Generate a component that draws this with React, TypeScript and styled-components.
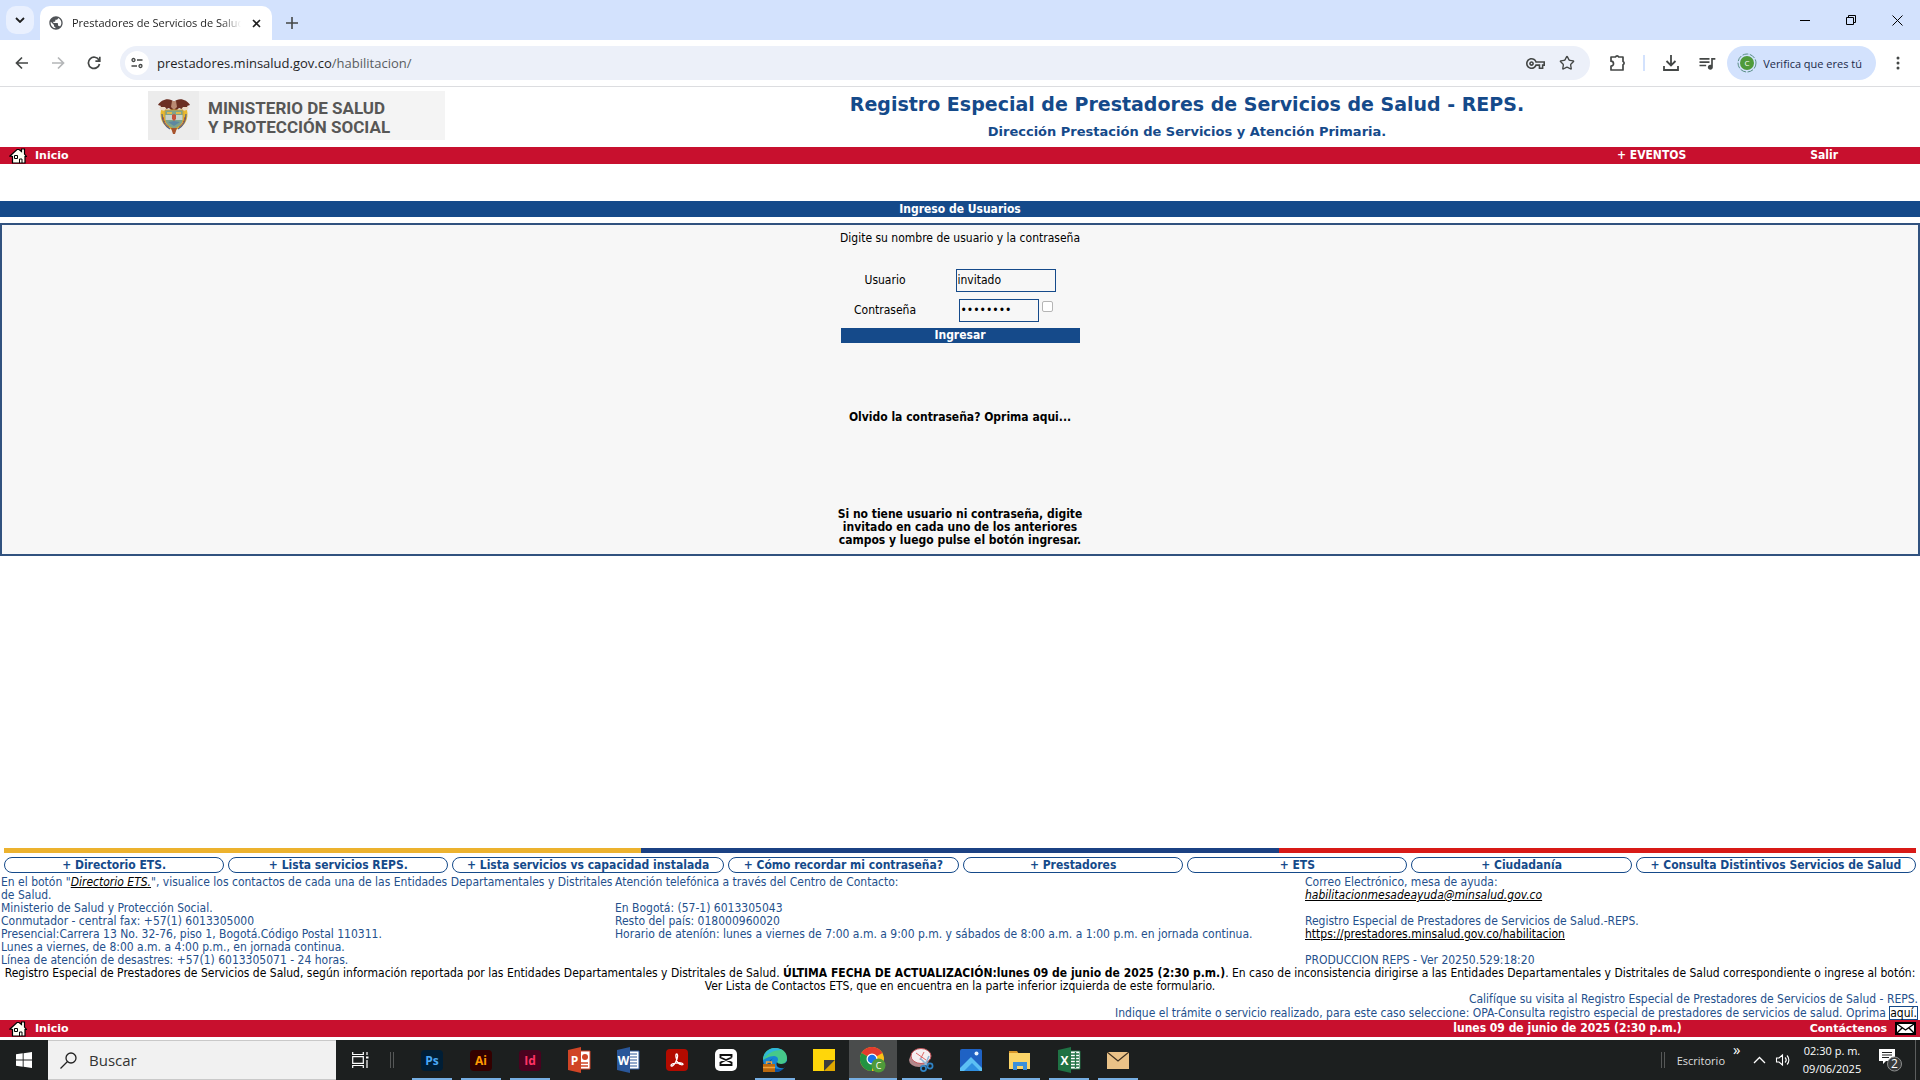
import React, { ReactNode } from "react";
import styled, { createGlobalStyle } from "styled-components";
import { Star } from "lucide-react";
import { MdQueueMusic, MdOutlineVpnKey, MdPublic } from "react-icons/md";

const verdana = `"DejaVu Sans Condensed", "DejaVu Sans", Verdana, sans-serif`;
const verdanaWide = `"DejaVu Sans", Verdana, sans-serif`;
const segoe = `"Segoe UI", "Open Sans", "Noto Sans", sans-serif`;
const NAVY = "#154a8a";
const RED = "#c8102e";

const Global = createGlobalStyle`
  * { box-sizing: border-box; }
  html, body, #root { height: 100%; margin: 0; }
  body { background: #fff; font: 12px/13px ${verdana}; color: #000; }
  button { font: inherit; border: 0; padding: 0; background: none; color: inherit; cursor: pointer; }
  a { color: inherit; text-decoration: none; }
`;

const Screen = styled.div`
  display: flex; flex-direction: column; min-height: 100vh;
`;

/* ---------- browser ---------- */
const TabStrip = styled.div`
  display: flex; align-items: flex-end; height: 40px; background: #d3e2fd; padding-left: 6px;
  font-family: ${segoe};
`;
const TabMenu = styled.button`
  display: grid; place-items: center; width: 28px; height: 28px; margin-bottom: 6px;
  border-radius: 10px;
  && { background: #e9f0fe; }
`;
const Tab = styled.div`
  display: flex; align-items: center; gap: 8px; width: 232px; height: 34px; margin-left: 6px;
  padding: 0 9px 0 8px; background: #fff; border-radius: 10px 10px 0 0; color: #1f1f1f;
`;
const TabTitle = styled.span`
  flex: 1; overflow: hidden; white-space: nowrap; font-size: 11px; line-height: 16px;
  mask-image: linear-gradient(90deg, #000 88%, transparent);
`;
const PlainButton = styled.button<{ $w?: number }>`
  display: grid; place-items: center; width: ${(p) => p.$w ?? 16}px; height: 34px; flex: none; color: #444746;
`;
const WindowControls = styled.div`
  display: flex; align-self: center; margin-left: auto;
`;
const Toolbar = styled.div`
  display: flex; align-items: center; height: 47px; padding: 0 0 0 4px; background: #fff;
  border-bottom: 1px solid #dcdde0; font-family: ${segoe};
`;
const Address = styled.div`
  display: flex; align-items: center; flex: 1; height: 34px; margin: 0 11px 0 8px; padding: 0 7px 0 5px;
  border-radius: 17px; background: #ecf0f9; color: #1f1f1f;
`;
const SiteInfo = styled.button`
  display: grid; place-items: center; width: 24px; height: 24px; border-radius: 50%;
  && { background: #fff; }
`;
const Url = styled.span`
  flex: 1; margin-left: 8px; font-size: 13px; line-height: 20px;
  span { color: #5a5d61; }
`;
const ToolbarRule = styled.span`
  width: 2px; height: 16px; margin: 0 8px; background: #d3e2fd;
`;
const ProfileChip = styled.button`
  display: flex; align-items: center; gap: 6px; height: 34px; margin-left: 2px; padding: 0 14px 0 10px;
  border-radius: 17px; color: #1b2a49;
  && { background: #d3e2fd; font-size: 11px; }
`;

/* ---------- page ---------- */
const Page = styled.div`
  display: flex; flex-direction: column; flex: 1; padding-bottom: 3px;
`;
const Header = styled.header`
  display: grid; grid-template-columns: 454px 1fr; height: 60px; padding: 4px 0;
`;
const Brand = styled.div`
  display: flex; align-items: center; width: 297px; height: 49px; margin-left: 148px; background: #f4f4f4;
  color: #575756; font: 700 17px/19px Roboto, "Open Sans", sans-serif;
`;
const BrandName = styled.span`
  padding-top: 4px;
`;
const Emblem = styled.div`
  display: grid; place-items: center; width: 51px; height: 49px; margin-right: 9px; background: #ececec;
`;
const Titles = styled.div`
  text-align: center; color: ${NAVY}; font-family: ${verdanaWide};
`;
const Title = styled.h1`
  margin: 0; font-size: 19px; line-height: 27px;
`;
const Subtitle = styled.h2`
  margin: 0; font-size: 13px; line-height: 27px;
`;
const RedBar = styled.nav`
  display: flex; align-items: center; height: 17px; padding: 0 4px 0 9px; background: ${RED};
  color: #fff; font-weight: 700; flex: none;
`;
const BarLink = styled.a`
  display: flex; align-items: center; gap: 8px; font: 700 11px/13px ${verdanaWide};
`;
const BarItems = styled.div<{ $gap: number; $end: number }>`
  display: flex; align-items: center; gap: ${(p) => p.$gap}px; margin: 0 ${(p) => p.$end}px 0 auto;
`;
const SectionTitle = styled.h3`
  margin: 37px 0 6px; background: ${NAVY}; color: #fff; font-size: 12px; line-height: 16px; text-align: center;
`;
const Panel = styled.main`
  display: flex; justify-content: center; border: 2px solid #31527f; background: #f7f7f7;
`;
const LoginForm = styled.form`
  display: flex; flex-direction: column; align-items: center; width: 239px; padding: 7px 0;
`;
const Prompt = styled.p`
  margin: 0 0 20px; white-space: nowrap;
`;
const Field = styled.div`
  display: grid; grid-template-columns: 89px 125px; justify-content: space-between; align-items: center;
  width: 100%; height: 30px;
  label { text-align: center; }
`;
const Controls = styled.div<{ $inset?: boolean }>`
  display: flex; gap: 3px; padding-left: ${(p) => (p.$inset ? 4 : 1)}px;
`;
const TextBox = styled.input<{ $w: number }>`
  width: ${(p) => p.$w}px; height: 23px; padding: 0 1px; border: 1px solid ${NAVY}; background: transparent;
  font: 12px ${verdana}; color: #000; outline: 0;
`;
const Check = styled.input`
  appearance: none; width: 11px; height: 11px; margin: 2px 0 0; border: 1px solid #b5b5b5; border-radius: 2px; background: #fff;
`;
const Submit = styled.button`
  width: 100%; height: 15px; margin: 3px 0 68px;
  && { background: ${NAVY}; color: #fff; font-weight: 700; }
`;
const Forgot = styled.a`
  font-weight: 700; white-space: nowrap;
`;
const Hint = styled.p`
  margin: 84px -10px 0; font-weight: 700; text-align: center; white-space: nowrap;
`;

const Footer = styled.footer`
  margin-top: auto;
`;
const Flag = styled.div`
  height: 5px; margin: 0 4px 4px;
  background: linear-gradient(90deg, #ecb22e 0 33.3%, #1b4183 33.3% 66.7%, #d81a17 66.7%);
`;
const Pills = styled.div`
  display: grid; grid-template-columns: 220fr 220fr 271fr 231fr 220fr 220fr 220fr 280fr; gap: 4px; padding: 0 4px;
`;
const Pill = styled.button`
  height: 16px; white-space: nowrap;
  && { border: 1px solid ${NAVY}; border-radius: 8px; color: ${NAVY}; font-weight: 700; }
`;
const Info = styled.div`
  display: grid; grid-template-columns: 614fr 690fr 614fr; padding: 3px 1px 0; color: #24508c;
`;
const InfoCell = styled.div`
  p { margin: 0; min-height: 13px; }
  a { color: #000; text-decoration: underline; }
`;
const Notice = styled.p`
  margin: 0; text-align: center;
`;
const Rating = styled.div`
  display: flex; flex-direction: column; align-items: flex-end; padding: 0 2px 0 0; color: #24508c;
`;
const HereLink = styled.a`
  display: inline-block; border: 1px solid ${NAVY}; color: #000; line-height: 12px;
`;

/* ---------- taskbar ---------- */
const Taskbar = styled.div`
  display: flex; align-items: center; height: 40px; flex: none; background: #1c1f1f; color: #fff;
  font-family: ${segoe};
`;
const StartButton = styled.button`
  display: grid; place-items: center; width: 48px; height: 40px;
`;
const Search = styled.label`
  display: flex; align-items: center; gap: 12px; width: 288px; height: 40px; padding-left: 12px;
  background: #f1f1f1; border: 1px solid #c9c9c9; border-width: 1px 0; color: #222;
  input { width: 200px; border: 0; background: none; outline: 0; padding: 0; font: 15px ${segoe}; color: #333; }
  input::placeholder { color: #333; opacity: 1; }
`;
const Apps = styled.div`
  display: flex; gap: 1px; margin-left: 8px;
`;
const AppButton = styled.button<{ $open?: boolean; $active?: boolean }>`
  display: grid; place-items: center; width: 48px; height: 40px;
  && {
    background-color: ${(p) => (p.$active ? "#4a4c4c" : "transparent")};
    background-image: ${(p) => (p.$open || p.$active ? "linear-gradient(#76aee2, #76aee2)" : "none")};
    background-repeat: no-repeat; background-position: bottom center;
    background-size: ${(p) => (p.$active ? 48 : 40)}px 2px;
  }
`;
const Adobe = styled.span<{ $bg: string; $fg: string }>`
  display: grid; place-items: center; width: 22px; height: 21px; border-radius: 4px;
  background: ${(p) => p.$bg}; color: ${(p) => p.$fg}; font: 700 12px ${segoe};
`;
const Grip = styled.span`
  width: 4px; height: 16px; margin: 0 6px; border: 1px solid #565858; border-width: 0 1px;
`;
const Tray = styled.div`
  display: flex; align-items: center; margin-left: auto; height: 40px;
`;
const Desktop = styled.span`
  margin-left: 6px; font-size: 11px; color: #ddd;
`;
const More = styled.span`
  width: 12px; margin: 0 8px 22px 8px; font-size: 15px; line-height: 16px;
`;
const Clock = styled.div`
  width: 62px; margin: 0 16px 0 9px; text-align: center; font-size: 11px; line-height: 18px; white-space: nowrap;
`;
const ShowDesktop = styled.button`
  width: 5px; height: 40px; margin-left: 12px;
  && { border-left: 1px solid #5c5e5e; }
`;

const Svg = ({ w, h = w, children }: { w: number; h?: number; children: ReactNode }) => (
  <svg width={w} height={h} viewBox={`0 0 ${w} ${h}`} fill="none" aria-hidden="true">{children}</svg>
);

const House = () => (
  <Svg w={18} h={16}>
    <path d="M1 8 8 1.500h2l2.500 2V1h3v5l2 2.500h-1.500V15H3.500V8.500z" fill="#fffff4" stroke="#000" strokeWidth="1.200" />
    <path d="M5.500 7.500h3v3h-3zM10.500 15v-4h2.500v4" stroke="#000" />
  </Svg>
);
const Mail = () => (
  <Svg w={21} h={13}>
    <path d="M1 1h19v11H1z" fill="#fff" stroke="#000" strokeWidth="2" />
    <path d="m2 2 8.500 6L19 2M2 11l5-5M19 11l-5-5" stroke="#000" strokeWidth="1.400" />
  </Svg>
);
const Crest = () => (
  <Svg w={34} h={36}>
    <path d="M17 4C13-1 4 1 1 7l3 1-1 2 4-1v3l5-2 2 2h6l2-2 5 2V9l4 1-1-2 3-1C30 1 21-1 17 4z" fill="#6b2f22" />
    <path d="m2 9 6 0 3 4-5 3zM32 9l-6 0-3 4 5 3z" fill="#e9d9c4" />
    <path d="M15 3h4l1 6-3 3-3-3z" fill="#b98a72" />
    <path d="M4 12c-2 9 2 17 12 20l2 0c10-3 14-11 12-20l-4 1v14H8V13z" fill="#e8b92e" />
    <path d="M5 16c0 7 3 12 8 15M29 16c0 7-3 12-8 15" stroke="#54618a" strokeWidth="1.200" />
    <path d="M6 19c1 5 3 8 6 10M28 19c-1 5-3 8-6 10" stroke="#b4522a" />
    <path d="M8 12h18v9c0 5-4 8-9 10-5-2-9-5-9-10z" fill="#7fa38b" stroke="#c9a23a" />
    <path d="M8.500 17h17v5h-17z" fill="#c9d2cc" />
    <path d="m15 17 2-1 2 1v4l-2 2-2-2z" fill="#c4523f" />
    <path d="M10 14h5v2h-5zM19 14h5v2h-5z" fill="#e0b84b" />
    <path d="m11 24 6-1 6 1-6 4z" fill="#5d87a0" />
    <path d="M14 30h6l-2 6h-2z" fill="#a8542d" />
  </Svg>
);
const Office = ({ color, letter, kind }: { color: string; letter: string; kind: "p" | "w" | "x" }) => (
  <Svg w={24} h={26}>
    <path d="M12 4h11v18H12z" fill="#fff" stroke={color} />
    {kind === "w" && <path d="M14 7h7M14 10h7M14 13h7M14 16h7M14 19h7" stroke={color} strokeWidth="1.200" />}
    {kind === "x" && <path d="M14 7h8M14 10h8M14 13h8M14 16h8M14 19h8M18.500 5v16" stroke={color} strokeWidth="1.300" />}
    {kind === "p" && <><circle cx="18" cy="10" r="3" fill={color} /><path d="M14 16h7M14 19h7" stroke={color} strokeWidth="1.400" /></>}
    <path d="M1 3 14 0v26L1 23z" fill={color} />
    <text x="7.500" y="17.500" textAnchor="middle" fill="#fff" fontFamily="Open Sans" fontWeight="700" fontSize="12">{letter}</text>
  </Svg>
);

const apps: { name: string; open?: boolean; active?: boolean; icon: ReactNode }[] = [
  { name: "Photoshop", open: true, icon: <Adobe $bg="#001e36" $fg="#4aa8f5">Ps</Adobe> },
  { name: "Illustrator", open: true, icon: <Adobe $bg="#330000" $fg="#ff9a00">Ai</Adobe> },
  { name: "InDesign", open: true, icon: <Adobe $bg="#49021f" $fg="#ff3366">Id</Adobe> },
  { name: "PowerPoint", icon: <Office color="#d04526" letter="P" kind="p" /> },
  { name: "Word", icon: <Office color="#2a579a" letter="W" kind="w" /> },
  {
    name: "Acrobat",
    icon: (
      <Svg w={22}>
        <rect width="22" height="22" rx="4" fill="#b30b00" />
        <path d="M10.500 5c2 0 1 5-1 8.500S5 18 5 16.500s4-2.500 7-2.700 5 .4 5 1.400-3 .8-4.800-1.200S9 5 10.500 5z" stroke="#fff" strokeWidth="1.300" />
      </Svg>
    ),
  },
  {
    name: "CapCut",
    icon: (
      <Svg w={22}>
        <rect width="22" height="22" rx="5" fill="#fff" />
        <path d="M16.500 8.500V6h-11v2.500l11 5V16h-11v-2.500l11-5" stroke="#111" strokeWidth="1.900" />
      </Svg>
    ),
  },
  {
    name: "Edge", open: true,
    icon: (
      <Svg w={26}>
        <circle cx="13" cy="13" r="12" fill="#1785d4" />
        <path d="M1 13C1 5 7 1 13 1c7 0 12 4 12 10 0 4-3 6-6 6-2 0-4-1-4-2 2-2 1-6-3-6-5 0-9 3-11 4z" fill="#46c98a" />
        <path d="M1 13C2 5 8 1 13 1c3 0 5 1 7 2-8 0-15 3-19 10z" fill="#2eb5dc" />
        <path d="M9 14c0 6 5 9 12 8-4 4-11 4-14-1-2-3-1-8 5-10-2 1-3 2-3 3z" fill="#0c4f9e" />
        <path d="M15 15c0 1 2 2 4 2 3 0 5-1 6-3 1 3-1 6-3 7-5 1-9-2-7-6z" fill="#1c1f1f" />
        <path d="M1 17h12v8H1z" fill="#b9680f" /><path d="M4.500 17v-2h5v2M1 20.500h12" stroke="#f2a33a" strokeWidth="1.300" />
      </Svg>
    ),
  },
  { name: "Notas", icon: <Svg w={22}><path d="M0 0h22v11L11 22H0z" fill="#ffd60a" /><path d="M11 11h11L11 22z" fill="#3d3d3d" /><path d="M22 11v11H11z" fill="#e0a800" /></Svg> },
  {
    name: "Chrome", active: true,
    icon: (
      <Svg w={26}>
        <circle cx="12" cy="12" r="12" fill="#fbc116" />
        <path d="M12 12 1.600 6A12 12 0 0 1 22.400 6z" fill="#e33b2e" />
        <path d="M12 12 1.600 6A12 12 0 0 0 12 24z" fill="#229342" />
        <circle cx="12" cy="12" r="5.500" fill="#fff" /><circle cx="12" cy="12" r="4.300" fill="#1a73e8" />
        <circle cx="18.500" cy="18.500" r="7" fill="#4f9a3a" />
        <text x="18.500" y="22" textAnchor="middle" fill="#fff" fontFamily="Open Sans" fontSize="9">C</text>
      </Svg>
    ),
  },
  {
    name: "Recortes", open: true,
    icon: (
      <Svg w={26} h={26}>
        <ellipse cx="10" cy="13" rx="10" ry="7" fill="#b3888c" /><ellipse cx="12" cy="9" rx="10" ry="7.500" fill="#f4eef0" stroke="#c4545a" />
        <path d="m7 6 10 7M15 5l-4 8" stroke="#d66" strokeWidth="1" />
        <path d="m11 11 8 8M20 9l-4 9" stroke="#8fb6d6" strokeWidth="1.600" />
        <circle cx="21" cy="19" r="2.600" stroke="#2f83c5" strokeWidth="1.700" /><circle cx="14.500" cy="21.500" r="2.600" stroke="#2f83c5" strokeWidth="1.700" />
      </Svg>
    ),
  },
  { name: "Fotos", icon: <Svg w={22}><rect width="22" height="22" rx="2" fill="#1f62c4" /><path d="M0 19 11 8l11 11v3H0z" fill="#5cc0f4" /><path d="m4 22 8-8 8 8z" fill="#2f8fe0" /><circle cx="16.500" cy="4.500" r="2" fill="#e8f4ff" /></Svg> },
  { name: "Explorador", open: true, icon: <Svg w={22} h={20}><path d="M0 1h8l2 3H0z" fill="#d9972a" /><path d="M0 3h21v16H0z" fill="#fbd468" /><path d="M4 20v-8h14v8h-4v-4H8v4z" fill="#3b8fdb" /></Svg> },
  { name: "Excel", open: true, icon: <Office color="#1f7244" letter="X" kind="x" /> },
  { name: "Correo", open: true, icon: <Svg w={22} h={17}><path d="M0 0h22v17H0z" fill="#e9c187" /><path d="m0 0 11 9 11-9" stroke="#3d2f1f" strokeWidth="1.300" /></Svg> },
];

const pills = ["+ Directorio ETS.", "+ Lista servicios REPS.", "+ Lista servicios vs capacidad instalada", "+ Cómo recordar mi contraseña?", "+ Prestadores", "+ ETS", "+ Ciudadanía", "+ Consulta Distintivos Servicios de Salud"];

function Browser() {
  return (
    <>
      <TabStrip>
        <TabMenu aria-label="Buscar pestañas"><Svg w={10} h={6}><path d="m1 1 4 4 4-4" stroke="#1f1f1f" strokeWidth="1.800" /></Svg></TabMenu>
        <Tab>
          <MdPublic size={16} color="#505357" />
          <TabTitle>Prestadores de Servicios de Salud</TabTitle>
          <PlainButton aria-label="Cerrar pestaña" $w={14}><Svg w={9}><path d="m1 1 7 7M8 1 1 8" stroke="#1f1f1f" strokeWidth="1.600" /></Svg></PlainButton>
        </Tab>
        <PlainButton aria-label="Nueva pestaña" $w={40}><Svg w={12}><path d="M6 0v12M0 6h12" stroke="#444746" strokeWidth="1.600" /></Svg></PlainButton>
        <WindowControls>
          <PlainButton aria-label="Minimizar" $w={46}><Svg w={10}><path d="M0 5.500h10" stroke="#000" /></Svg></PlainButton>
          <PlainButton aria-label="Restaurar" $w={46}><Svg w={10}><path d="M.5 2.500h7v7h-7zM2.500 2.500v-2h7v7h-2" stroke="#000" /></Svg></PlainButton>
          <PlainButton aria-label="Cerrar" $w={46}><Svg w={11}><path d="m.5.5 10 10M10.500.5l-10 10" stroke="#000" /></Svg></PlainButton>
        </WindowControls>
      </TabStrip>
      <Toolbar>
        <PlainButton aria-label="Atrás" $w={36}><Svg w={14}><path d="M13 7H2M7 1.500 1.500 7 7 12.500" stroke="#444746" strokeWidth="1.700" /></Svg></PlainButton>
        <PlainButton aria-label="Adelante" $w={36}><Svg w={14}><path d="M1 7h11M7 1.500 12.500 7 7 12.500" stroke="#b4b6b8" strokeWidth="1.700" /></Svg></PlainButton>
        <PlainButton aria-label="Recargar" $w={36}><Svg w={14}><path d="M12 4.200A5.600 5.600 0 1 0 12.500 8M12.800.8v4.400H8.400" stroke="#444746" strokeWidth="1.700" /></Svg></PlainButton>
        <Address>
          <SiteInfo aria-label="Información del sitio"><Svg w={12}><path d="M6 3h5.500M.5 9H6" stroke="#444746" strokeWidth="1.600" /><circle cx="2.500" cy="3" r="1.500" stroke="#444746" strokeWidth="1.300" /><circle cx="9.500" cy="9" r="1.500" stroke="#444746" strokeWidth="1.300" /></Svg></SiteInfo>
          <Url>prestadores.minsalud.gov.co<span>/habilitacion/</span></Url>
          <PlainButton aria-label="Contraseñas" $w={32}><MdOutlineVpnKey size={19} /></PlainButton>
          <PlainButton aria-label="Favoritos" $w={32}><Star size={16} /></PlainButton>
        </Address>
        <PlainButton aria-label="Extensiones" $w={34}>
          <Svg w={18}><path d="M2 3h4.500a1.700 1.700 0 0 1 3.200 0H14v4.500a1.700 1.700 0 0 1 0 3.200V16H2v-3.800a2.300 2.300 0 0 0 0-5z" stroke="#444746" strokeWidth="1.700" strokeLinejoin="round" /></Svg>
        </PlainButton>
        <ToolbarRule />
        <PlainButton aria-label="Descargas" $w={36}><Svg w={16}><path d="M8 0v10M3.500 6 8 10.500 12.500 6M1 11v4h14v-4" stroke="#444746" strokeWidth="1.800" /></Svg></PlainButton>
        <PlainButton aria-label="Control multimedia" $w={36}><MdQueueMusic size={20} /></PlainButton>
        <ProfileChip>
          <Svg w={20}><circle cx="10" cy="10" r="9" stroke="#5a8f86" strokeDasharray="6 1.500" /><circle cx="10" cy="10" r="7" fill="#4f9a3a" /><text x="10" y="13" textAnchor="middle" fill="#fff" fontSize="8" fontFamily="Open Sans">C</text></Svg>
          Verifica que eres tú
        </ProfileChip>
        <PlainButton aria-label="Menú" $w={44}><Svg w={4} h={14}><circle cx="2" cy="2" r="1.500" fill="#444746" /><circle cx="2" cy="7" r="1.500" fill="#444746" /><circle cx="2" cy="12" r="1.500" fill="#444746" /></Svg></PlainButton>
      </Toolbar>
    </>
  );
}

function Login() {
  return (
    <LoginForm onSubmit={(e) => e.preventDefault()}>
      <Prompt>Digite su nombre de usuario y la contraseña</Prompt>
      <Field>
        <label htmlFor="user">Usuario</label>
        <Controls><TextBox id="user" $w={100} defaultValue="invitado" /></Controls>
      </Field>
      <Field>
        <label htmlFor="pass">Contraseña</label>
        <Controls $inset>
          <TextBox id="pass" type="password" $w={80} defaultValue="invitado" />
          <Check type="checkbox" aria-label="Mostrar contraseña" />
        </Controls>
      </Field>
      <Submit type="submit">Ingresar</Submit>
      <Forgot href="#">Olvido la contraseña? Oprima aqui...</Forgot>
      <Hint>Si no tiene usuario ni contraseña, digite<br />invitado en cada uno de los anteriores<br />campos y luego pulse el botón ingresar.</Hint>
    </LoginForm>
  );
}

export default function App() {
  return (
    <Screen>
      <Global />
      <Browser />
      <Page>
        <Header>
          <Brand><Emblem><Crest /></Emblem><BrandName>MINISTERIO DE SALUD<br />Y PROTECCIÓN SOCIAL</BrandName></Brand>
          <Titles>
            <Title>Registro Especial de Prestadores de Servicios de Salud - REPS.</Title>
            <Subtitle>Dirección Prestación de Servicios y Atención Primaria.</Subtitle>
          </Titles>
        </Header>
        <RedBar>
          <BarLink href="#"><House />Inicio</BarLink>
          <BarItems $gap={124} $end={78}><a href="#">+ EVENTOS</a><a href="#">Salir</a></BarItems>
        </RedBar>
        <SectionTitle>Ingreso de Usuarios</SectionTitle>
        <Panel><Login /></Panel>
        <Footer>
          <Flag />
          <Pills>{pills.map((p) => <Pill key={p}>{p}</Pill>)}</Pills>
          <Info>
            <InfoCell>
              <p>En el botón "<a href="#"><i>Directorio ETS.</i></a>", visualice los contactos de cada una de las Entidades Departamentales y Distritales de Salud.</p>
              <p>Ministerio de Salud y Protección Social.</p>
              <p>Conmutador - central fax: +57(1) 6013305000</p>
              <p>Presencial:Carrera 13 No. 32-76, piso 1, Bogotá.Código Postal 110311.</p>
              <p>Lunes a viernes, de 8:00 a.m. a 4:00 p.m., en jornada continua.</p>
              <p>Línea de atención de desastres: +57(1) 6013305071 - 24 horas.</p>
            </InfoCell>
            <InfoCell>
              <p>Atención telefónica a través del Centro de Contacto:</p>
              <p />
              <p>En Bogotá: (57-1) 6013305043</p>
              <p>Resto del país: 018000960020</p>
              <p>Horario de ateníón: lunes a viernes de 7:00 a.m. a 9:00 p.m. y sábados de 8:00 a.m. a 1:00 p.m. en jornada continua.</p>
            </InfoCell>
            <InfoCell>
              <p>Correo Electrónico, mesa de ayuda:</p>
              <p><a href="#"><i>habilitacionmesadeayuda@minsalud.gov.co</i></a></p>
              <p />
              <p>Registro Especial de Prestadores de Servicios de Salud.-REPS.</p>
              <p><a href="#">https://prestadores.minsalud.gov.co/habilitacion</a></p>
              <p />
              <p>PRODUCCION REPS - Ver 20250.529:18:20</p>
            </InfoCell>
          </Info>
          <Notice>
            Registro Especial de Prestadores de Servicios de Salud, según información reportada por las Entidades Departamentales y Distritales de Salud. <b>ÚLTIMA FECHA DE ACTUALIZACIÓN:lunes 09 de junio de 2025 (2:30 p.m.)</b>. En caso de inconsistencia dirigirse a las Entidades Departamentales y Distritales de Salud correspondiente o ingrese al botón:<br />Ver Lista de Contactos ETS, que en encuentra en la parte inferior izquierda de este formulario.
          </Notice>
          <Rating>
            <span>Califíque su visita al Registro Especial de Prestadores de Servicios de Salud - REPS.</span>
            <span>Indique el trámite o servicio realizado, para este caso seleccione: OPA-Consulta registro especial de prestadores de servicios de salud. Oprima <HereLink href="#">aquí.</HereLink></span>
          </Rating>
          <RedBar>
            <BarLink href="#"><House />Inicio</BarLink>
            <BarItems $gap={128} $end={0}>
              <span>lunes 09 de junio de 2025 (2:30 p.m.)</span>
              <BarLink href="#">Contáctenos<Mail /></BarLink>
            </BarItems>
          </RedBar>
        </Footer>
      </Page>
      <Taskbar>
        <StartButton aria-label="Inicio"><Svg w={16}><path d="M0 2.300 6.700 1.300v6.200H0zM7.600 1.200 16 0v7.500H7.600zM0 8.500h6.700v6.200L0 13.700zM7.600 8.500H16V16l-8.400-1.200z" fill="#fff" /></Svg></StartButton>
        <Search>
          <Svg w={17}><circle cx="11" cy="6" r="5" stroke="#222" strokeWidth="1.300" /><path d="m7.500 9.500-7 7" stroke="#222" strokeWidth="1.300" /></Svg>
          <input placeholder="Buscar" aria-label="Buscar" />
        </Search>
        <AppButton aria-label="Vista de tareas"><Svg w={17} h={16}><path d="M.7 0v2.500h10.600V0M.7 16v-2.500h10.600V16M.7 4.700h10.600v6.600H.7zM15 0v3M15 8v8" stroke="#fff" strokeWidth="1.200" /><path d="M14 4.500h2.500v2H14z" fill="#fff" /></Svg></AppButton>
        <Grip />
        <Apps>{apps.map((a) => <AppButton key={a.name} aria-label={a.name} $open={a.open} $active={a.active}>{a.icon}</AppButton>)}</Apps>
        <Tray>
          <Grip />
          <Desktop>Escritorio</Desktop>
          <More>»</More>
          <Svg w={13} h={8}><path d="m1 7 5.500-5.500L12 7" stroke="#fff" strokeWidth="1.300" /></Svg>
          <Svg w={26} h={14}><path d="M10.500 5H13l3.500-3v10L13 9h-2.500zM19 4.500c1.500 1.500 1.500 3.500 0 5M21 2.500c2.500 2.500 2.500 6.500 0 9" stroke="#fff" strokeWidth="1.100" /></Svg>
          <Clock>02:30 p. m.<br />09/06/2025</Clock>
          <Svg w={24} h={24}>
            <path d="M0 1h16v12H7l-3 3v-3H0z" fill="#fff" /><path d="M3 4.500h10M3 7h10M3 9.500h7" stroke="#1c1f1f" />
            <circle cx="15.500" cy="16" r="7" fill="#3a3c3c" stroke="#8c8e8e" />
            <text x="15.500" y="20" textAnchor="middle" fill="#fff" fontSize="12" fontFamily="Open Sans">2</text>
          </Svg>
          <ShowDesktop aria-label="Mostrar escritorio" />
        </Tray>
      </Taskbar>
    </Screen>
  );
}
